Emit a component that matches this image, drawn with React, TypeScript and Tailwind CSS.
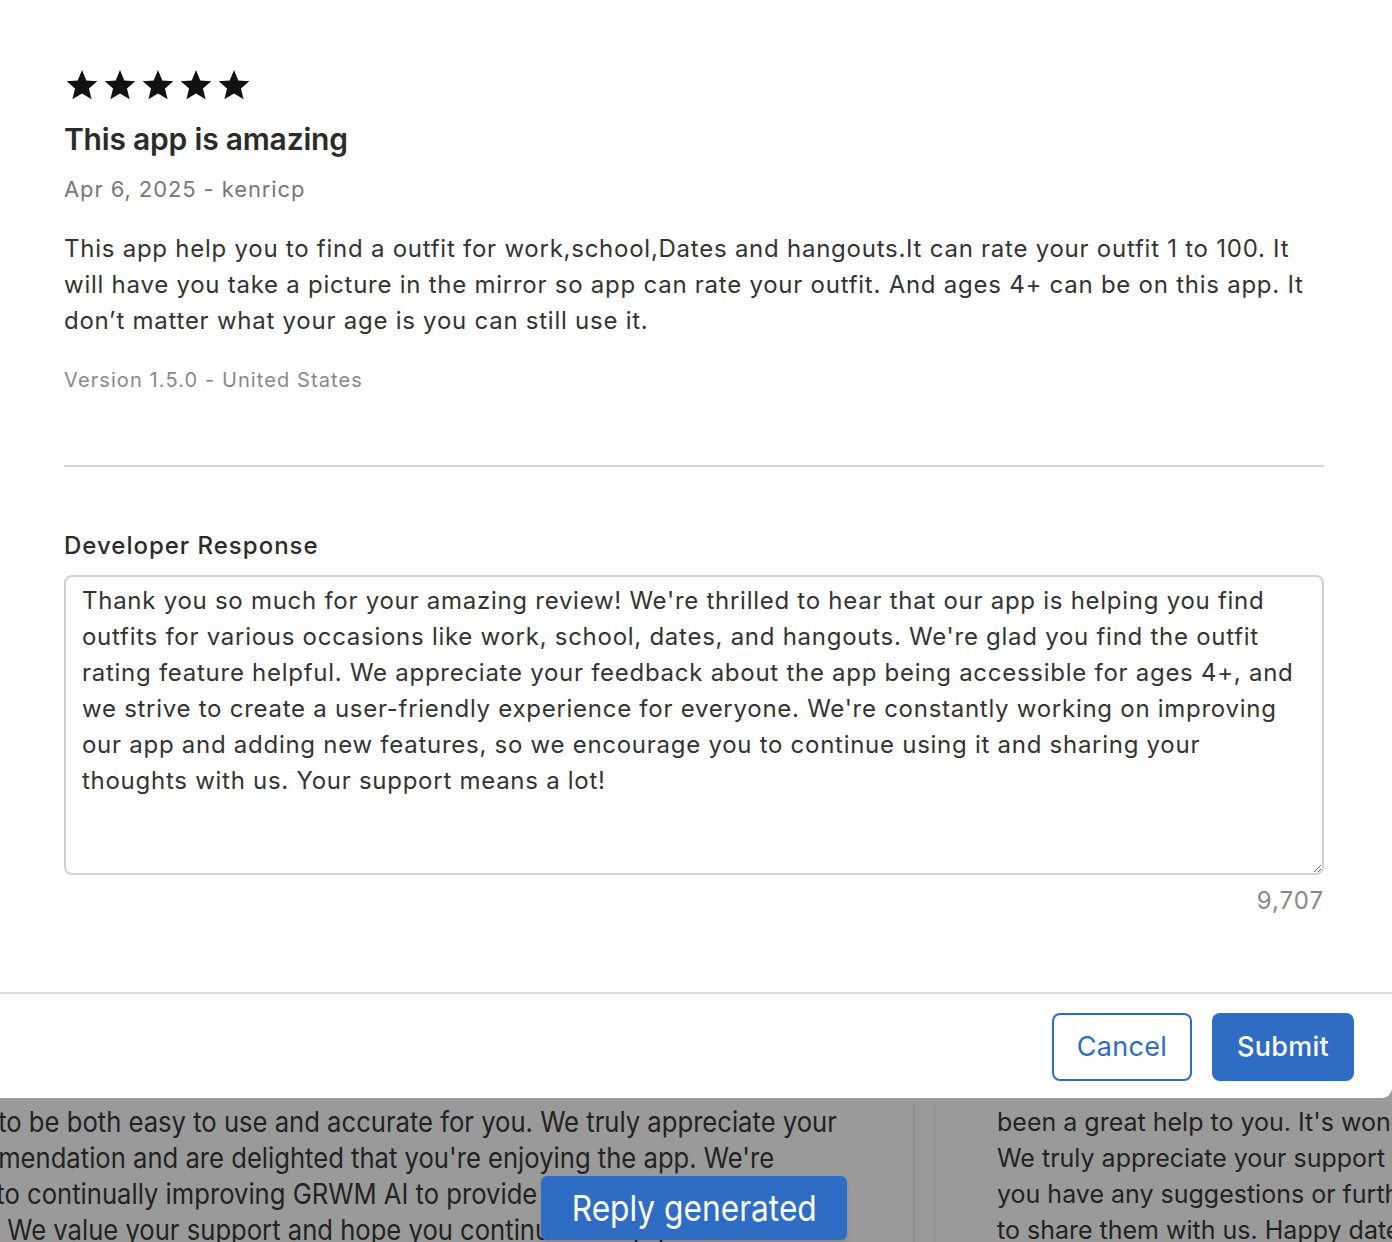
import React from "react";

const font = { fontFamily: "Inter, 'Noto Sans', sans-serif" };

function Star() {
  return (
    <svg width="34" height="32" viewBox="0 0 24 23" className="block">
      <path
        d="M12 0.8l3.1 7.4 7.9 0.6-6 5.2 1.9 7.8L12 17.6l-6.9 4.2 1.9-7.8-6-5.2 7.9-0.6z"
        fill="#111"
      />
    </svg>
  );
}

export default function App() {
  const reply =
    "Thank you so much for your amazing review! We're thrilled to hear that our app is helping you find\noutfits for various occasions like work, school, dates, and hangouts. We're glad you find the outfit\nrating feature helpful. We appreciate your feedback about the app being accessible for ages 4+, and\nwe strive to create a user-friendly experience for everyone. We're constantly working on improving\nour app and adding new features, so we encourage you to continue using it and sharing your\nthoughts with us. Your support means a lot!";
  return (
    <div
      className="w-[1392px] h-[1242px] overflow-hidden relative bg-[#9a9a9a]"
      style={font}
    >
      <div className="bg-white h-[1098px] rounded-br-[10px] flex flex-col">
        <div className="pl-[64px] pr-[68px] pt-[69px] flex-1">
          <div className="flex gap-[4px] ml-[1px]">
            <Star />
            <Star />
            <Star />
            <Star />
            <Star />
          </div>
          <div className="mt-[20px] text-[30px] leading-[36px] font-semibold text-[#2b2b2b] tracking-[-0.2px]">
            This app is amazing
          </div>
          <div className="mt-[14px] text-[22px] leading-[36px] text-[#777] tracking-[0.9px]">
            Apr 6, 2025 - kenricp
          </div>
          <div className="mt-[24px] text-[24px] leading-[36px] text-[#333] tracking-[0.75px] whitespace-nowrap">
            <div>
              This app help you to find a outfit for work,school,Dates and hangouts.It can rate your outfit 1 to 100. It
            </div>
            <div>
              will have you take a picture in the mirror so app can rate your outfit. And ages 4+ can be on this app. It
            </div>
            <div>don’t matter what your age is you can still use it.</div>
          </div>
          <div className="mt-[28px] text-[20px] leading-[26px] text-[#888] tracking-[1.1px]">
            Version 1.5.0 - United States
          </div>
          <div className="mt-[72px] h-[2px] bg-[#d6d6d6]" />
          <div className="mt-[63px] text-[24px] leading-[32px] font-medium text-[#2b2b2b] tracking-[1px]">
            Developer Response
          </div>
          <textarea
            readOnly
            value={reply}
            wrap="off"
            className="mt-[13px] block w-full h-[300px] border-2 border-[#d2d2d2] rounded-[8px] pl-[16px] pr-[16px] pt-[6px] text-[24px] leading-[36px] tracking-[0.73px] text-[#333] outline-none resize-y overflow-hidden"
            style={font}
          />
          <div className="mt-[8px] text-right text-[24px] leading-[36px] text-[#888] tracking-[1px]">
            9,707
          </div>
        </div>
        <div className="h-[2px] bg-[#dcdcdc]" />
        <div className="h-[104px] flex justify-end items-start pt-[19px] pr-[38px] gap-[20px]">
          <button className="w-[140px] h-[68px] rounded-[8px] border-2 border-[#2f6dc4] text-[#2f6dc4] text-[27px] tracking-[0.3px] bg-white">
            Cancel
          </button>
          <button className="w-[142px] h-[68px] rounded-[8px] bg-[#2f6dc4] text-white text-[27px] tracking-[0.3px] font-medium">
            Submit
          </button>
        </div>
      </div>
      <div className="flex h-[144px] pt-[6px]">
        <div className="w-[913px] shrink-0 overflow-hidden text-[#222] text-[28px] leading-[36px]">
          <div className="origin-left scale-x-[0.915] whitespace-nowrap w-[1100px]">
            <div className="-ml-[2px]">to be both easy to use and accurate for you. We truly appreciate your</div>
            <div className="-ml-[2px]">mendation and are delighted that you're enjoying the app. We're</div>
            <div className="-ml-[4px]">to continually improving GRWM AI to provide you with the best</div>
            <div>&nbsp;We value your support and hope you continue to enjoy</div>
          </div>
        </div>
        <div className="w-[2px] bg-[#8f8f8f] shrink-0" />
        <div className="w-[19px] shrink-0" />
        <div className="w-[2px] bg-[#939393] shrink-0" />
        <div className="pl-[61px] whitespace-nowrap text-[#222] text-[25px] leading-[36px] overflow-hidden">
          <div>been a great help to you. It's wonderful</div>
          <div>We truly appreciate your support</div>
          <div>you have any suggestions or further</div>
          <div>to share them with us. Happy dates</div>
        </div>
      </div>
      <div className="absolute left-[541px] top-[1176px] w-[306px] h-[64px] rounded-[6px] bg-[#2f6dc4] flex items-center justify-center shadow-md">
        <span className="text-white text-[36px] leading-[40px] inline-block scale-x-[0.88]">
          Reply generated
        </span>
      </div>
    </div>
  );
}
